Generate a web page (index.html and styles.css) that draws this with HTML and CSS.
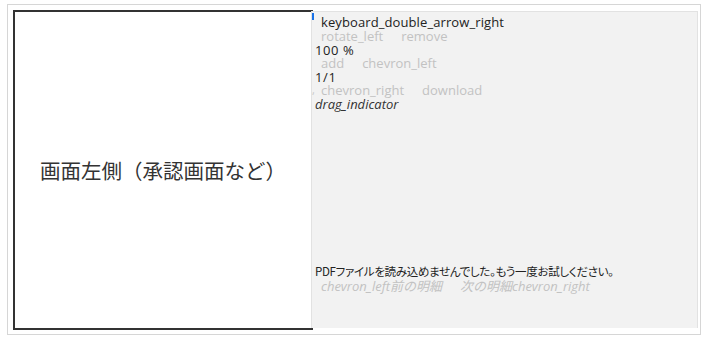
FILE: index.html
```html
<!DOCTYPE html>
<html lang="ja">
<head>
<meta charset="utf-8">
<title>承認画面</title>
<link rel="stylesheet" href="styles.css">
</head>
<body>
<div class="frame">
  <div class="left">
    <p class="left-label">画面左側（承認画面など）</p>
  </div>
  <div class="right">
    <span class="focus-mark"></span>
    <div class="toolbar">
      <button class="btn btn-on">keyboard_double_arrow_right</button>
      <div class="row"><button class="btn btn-off">rotate_left</button><button class="btn btn-off">remove</button></div>
      <div class="value">100 %</div>
      <div class="row"><button class="btn btn-off">add</button><button class="btn btn-off">chevron_left</button></div>
      <div class="value">1/1</div>
      <div class="row"><span class="tick">,</span><button class="btn btn-off">chevron_right</button><button class="btn btn-off">download</button></div>
      <div class="drag">drag_indicator</div>
    </div>
    <div class="viewer">
      <p class="msg">PDFファイルを読み込めませんでした。もう一度お試しください。</p>
      <div class="nav"><button class="btn nav-btn">chevron_left前の明細</button><button class="btn nav-btn">次の明細chevron_right</button></div>
    </div>
  </div>
</div>
</body>
</html>
```
FILE: styles.css
```css
* { box-sizing: border-box; }
html, body { margin: 0; background: #fff; }
body {
  padding: 4px 0 0 7px;
  font-family: "Open Sans", "Noto Sans CJK JP", sans-serif;
  color: #333;
}
.frame {
  width: 694px;
  height: 331px;
  border: 1px solid #d6d6d6;
  padding: 5px 2px 3px 5px;
  display: flex;
  align-items: flex-start;
}
.left {
  width: 300px;
  height: 320px;
  flex: none;
  border: 2px solid #333;
  display: flex;
  align-items: center;
  justify-content: center;
}
.left-label {
  margin: 0;
  font-family: "Noto Sans CJK JP", sans-serif;
  font-size: 20.5px;
  color: #333;
}
.right {
  position: relative;
  flex: 1;
  margin: 1px 0 0 -2px;
  height: 317px;
  background: #f2f2f2;
  border: 1px solid #e2e2e2;
  border-bottom: none;
  padding: 2px 0 0 3px;
  font-size: 13px;
}
.focus-mark {
  position: absolute;
  left: 0;
  top: 1px;
  width: 2px;
  height: 7px;
  background: #1a73e8;
}
.toolbar { display: flex; flex-direction: column; align-items: flex-start; }
.btn {
  font: inherit;
  background: none;
  border: none;
  margin: 0;
  padding: 0 6px;
  line-height: 13px;
  cursor: pointer;
}
.btn-on { color: #222; line-height: 16px; letter-spacing: 0.1px; }
.btn-off { color: #c2c2c2; }
.row { display: flex; gap: 6px; align-items: center; position: relative; }
.value { line-height: 14px; color: #222; letter-spacing: 0.6px; }
.tick {
  position: absolute;
  left: -3px;
  top: -2px;
  color: #c8c8c8;
  font-size: 11px;
}
.drag { font-style: italic; color: #333; line-height: 14px; }
.viewer { margin-top: 152px; }
.msg {
  margin: 0;
  font-family: "Noto Sans CJK JP", sans-serif;
  font-feature-settings: "palt";
  font-size: 11.5px;
  letter-spacing: -0.3px;
  line-height: 16px;
  color: #222;
}
.nav { display: flex; gap: 6px; }
.nav-btn {
  font-style: italic;
  color: #c2c2c2;
  font-family: "Open Sans", "Noto Sans CJK JP", sans-serif;
  font-size: 13px;
  line-height: 15px;
}
```
